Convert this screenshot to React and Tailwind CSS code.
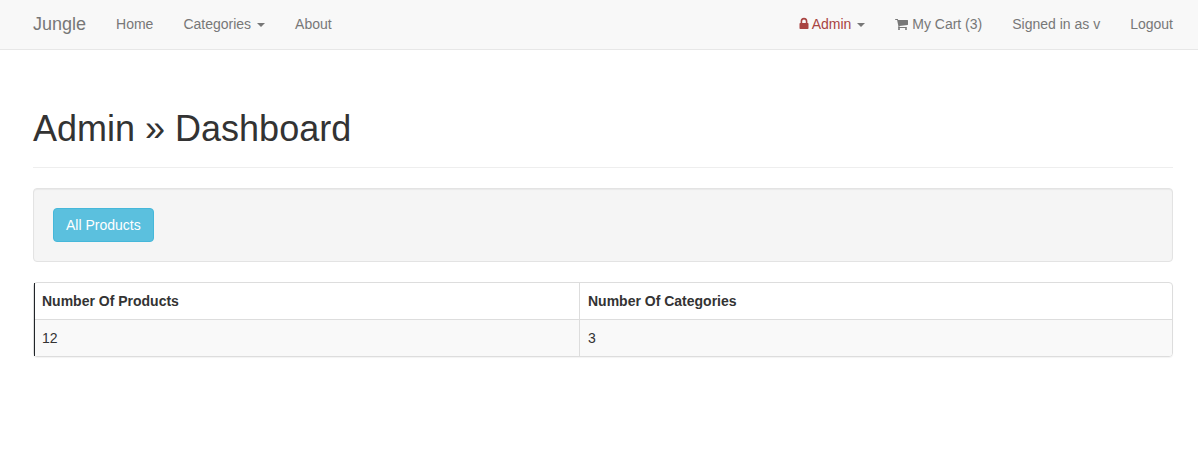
import React from "react";

function Caret() {
  return (
    <span className="ml-[6px] inline-block h-0 w-0 border-x-4 border-t-4 border-x-transparent border-t-[#777] align-middle" />
  );
}

function LockIcon() {
  return (
    <svg viewBox="0 0 10 14" className="-mr-px inline-block h-[14px] w-[10px] shrink-0" fill="currentColor">
      <path
        fillRule="evenodd"
        d="M1.6 6V4.2a3.1 3.2 0 0 1 6.8 0V6h.3q.8 0 .8.8v4.4q0 .8-.8.8H1.3q-.8 0-.8-.8V6.8q0-.8.8-.8zM3.2 6h3.6V4.2a1.8 1.8 0 0 0-3.6 0z"
      />
    </svg>
  );
}

function CartIcon() {
  return (
    <svg viewBox="64 0 1664 1792" className="inline-block h-[14px] w-[13px] shrink-0" fill="currentColor">
      <path d="M704 1536q0 52-38 90t-90 38-90-38-38-90 38-90 90-38 90 38 38 90zm896 0q0 52-38 90t-90 38-90-38-38-90 38-90 90-38 90 38 38 90zm128-1088v512q0 24-16.5 42.5t-40.5 21.5l-1044 122q13 60 13 70 0 16-24 64h920q26 0 45 19t19 45-19 45-45 19h-1024q-26 0-45-19t-19-45q0-11 8-31.5t16-36 21.5-40 15.5-29.5l-177-823h-204q-26 0-45-19t-19-45 19-45 45-19h256q16 0 28.5 6.5t19.5 15.5 13 24.5 8 26 5.5 29.5 4.5 26h1201q26 0 45 19t19 45z" />
    </svg>
  );
}

function Navbar() {
  return (
    <nav className="h-[50px] border-b border-[#e7e7e7] bg-[#f8f8f8] pr-[25px] pl-[33px] text-[#777]">
      <div className="flex justify-between pt-[14px]">
        <div className="flex gap-[30px]">
          <a className="text-[18px]">Jungle</a>
          <a>Home</a>
          <a>Categories<Caret /></a>
          <a>About</a>
        </div>
        <div className="flex gap-[30px]">
          <a className="flex items-center text-[#a94442]">
            <LockIcon />
            <span className="ml-[3.9px]">Admin<Caret /></span>
          </a>
          <a className="flex items-center">
            <CartIcon />
            <span className="ml-[3.9px]">My Cart (3)</span>
          </a>
          <a>Signed in as v</a>
          <a>Logout</a>
        </div>
      </div>
    </nav>
  );
}

export default function App() {
  return (
    <div className="min-h-screen bg-white font-['Liberation_Sans',Arial,sans-serif] text-[14px] leading-[20px] text-[#333]">
      <Navbar />
      <main className="pr-[25px] pl-[33px]">
        <header className="border-b border-[#eee] pt-[59px] pb-[18px]">
          <h1 className="text-[36px] leading-[40px] font-medium">Admin » Dashboard</h1>
        </header>
        <section className="mt-[20px] rounded-[4px] border border-[#e3e3e3] bg-[#f5f5f5] p-[19px] shadow-[inset_0_1px_1px_rgba(0,0,0,0.05)]">
          <button className="block rounded-[4px] border border-[#46b8da] bg-[#5bc0de] px-[12px] py-[6px] text-white">
            All Products
          </button>
        </section>
        <section className="mt-[20px] rounded-[4px] border border-[#ddd] shadow-[0_1px_1px_rgba(0,0,0,0.05)]">
          <div className="grid grid-cols-[545px_1fr] border-l border-[#212529]">
            <div className="border-r border-b border-[#ddd] px-[7px] py-[8px] font-bold">Number Of Products</div>
            <div className="rounded-tr-[3px] border-b border-[#ddd] p-[8px] font-bold">Number Of Categories</div>
            <div className="border-r border-[#ddd] bg-[#f9f9f9] px-[7px] py-[8px]">12</div>
            <div className="rounded-br-[3px] bg-[#f9f9f9] p-[8px]">3</div>
          </div>
        </section>
      </main>
    </div>
  );
}
